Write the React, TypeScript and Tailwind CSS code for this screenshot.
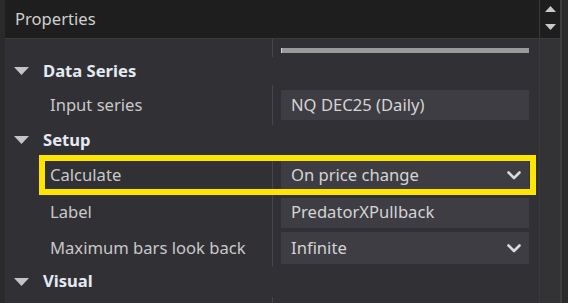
import React from "react";

const font = { fontFamily: '"Noto Sans", "Open Sans", sans-serif' };

function Tri() {
  return (
    <svg width="15" height="8" viewBox="0 0 15 8" className="shrink-0">
      <path d="M0 0 L15 0 L7.5 8 Z" fill="#c4c4c4" />
    </svg>
  );
}

function Chevron() {
  return (
    <svg width="14" height="9" viewBox="0 0 14 9" className="shrink-0">
      <path d="M1.5 1.5 L7 7 L12.5 1.5" fill="none" stroke="#dadada" strokeWidth="2.6" strokeLinecap="round" strokeLinejoin="round" />
    </svg>
  );
}

function Section({ title, h }: { title: string; h: string }) {
  return (
    <div className={`flex items-center shrink-0 ${h}`}>
      <div className="ml-[9px]">
        <Tri />
      </div>
      <span className="ml-[14px] text-[16.6px] font-bold text-[#e4eaf3] leading-none">{title}</span>
    </div>
  );
}

function Row({
  label,
  value,
  h,
  boxH,
  dropdown,
  highlight,
}: {
  label: string;
  value: string;
  h: string;
  boxH: string;
  dropdown?: boolean;
  highlight?: boolean;
}) {
  return (
    <div className={`relative flex shrink-0 ${h}`}>
      <div className="w-[268px] border-r border-[#47464b] flex items-center pl-[45px]">
        <span className="text-[16.6px] text-[#c9c9c9] leading-none">{label}</span>
      </div>
      <div className="flex-1 pl-2 pr-[10px] flex items-center">
        <div className={`w-full ${boxH} bg-[#3e3d43] flex items-center justify-between pl-[10px] pr-[8px]`}>
          <span className="text-[16.6px] text-[#d4d4d4] leading-none">{value}</span>
          {dropdown && <Chevron />}
        </div>
      </div>
      {highlight && (
        <div className="absolute left-[34px] top-0 w-[497px] h-[40px] border-[6px] border-[#ffe600]" />
      )}
    </div>
  );
}

export default function App() {
  return (
    <div className="w-[568px] h-[303px] flex overflow-hidden bg-[#2a2a2a]" style={font}>
      <div className="w-[5px] shrink-0 bg-[#2a2a2a]" />
      <div className="w-[534px] shrink-0 flex flex-col">
        <div className="h-[39px] shrink-0 bg-[#1e1e1e] border-b border-[#3c3c3c] flex items-center pl-[10px]">
          <span className="text-[16.6px] text-[#cfcfcf] leading-none">Properties</span>
        </div>
        <div className="flex-1 bg-[#313034] flex flex-col overflow-hidden">
          <div className="flex h-[18px] shrink-0">
            <div className="w-[268px] border-r border-[#47464b]" />
            <div className="flex-1 pl-2 pr-[10px] pt-[9px]">
              <div className="h-[5px] bg-[#9a9a9a] border-l border-[#d6d6d6]" />
            </div>
          </div>
          <Section title="Data Series" h="h-[28px]" />
          <Row label="Input series" value="NQ DEC25 (Daily)" h="h-[40px]" boxH="h-[30px]" />
          <Section title="Setup" h="h-[30px]" />
          <Row label="Calculate" value="On price change" h="h-[40px]" boxH="h-[32px]" dropdown highlight />
          <Row label="Label" value="PredatorXPullback" h="h-[35px]" boxH="h-[30px]" />
          <Row label="Maximum bars look back" value="Infinite" h="h-[36px]" boxH="h-[32px]" dropdown />
          <Section title="Visual" h="h-[31px]" />
          <div className="flex h-[20px] shrink-0">
            <div className="w-[268px] border-r border-[#47464b]" />
          </div>
        </div>
      </div>
      <div className="w-[21px] shrink-0 flex flex-col border-l border-[#3a3a3a]">
        <div className="h-[39px] shrink-0 bg-[#1e1e1e] border-b border-[#3c3c3c] flex flex-col items-center pt-[6px]">
          <svg width="11" height="6" viewBox="0 0 11 6">
            <path d="M0 6 L11 6 L5.5 0 Z" fill="#c8c8c8" />
          </svg>
          <svg width="11" height="6" viewBox="0 0 11 6" className="mt-[12px]">
            <path d="M0 0 L11 0 L5.5 6 Z" fill="#c8c8c8" />
          </svg>
        </div>
        <div className="flex-1 bg-[#333335]" />
      </div>
      <div className="w-[8px] shrink-0 border-l-2 border-[#3f3f3f] bg-[#2b2b2b]" />
    </div>
  );
}
